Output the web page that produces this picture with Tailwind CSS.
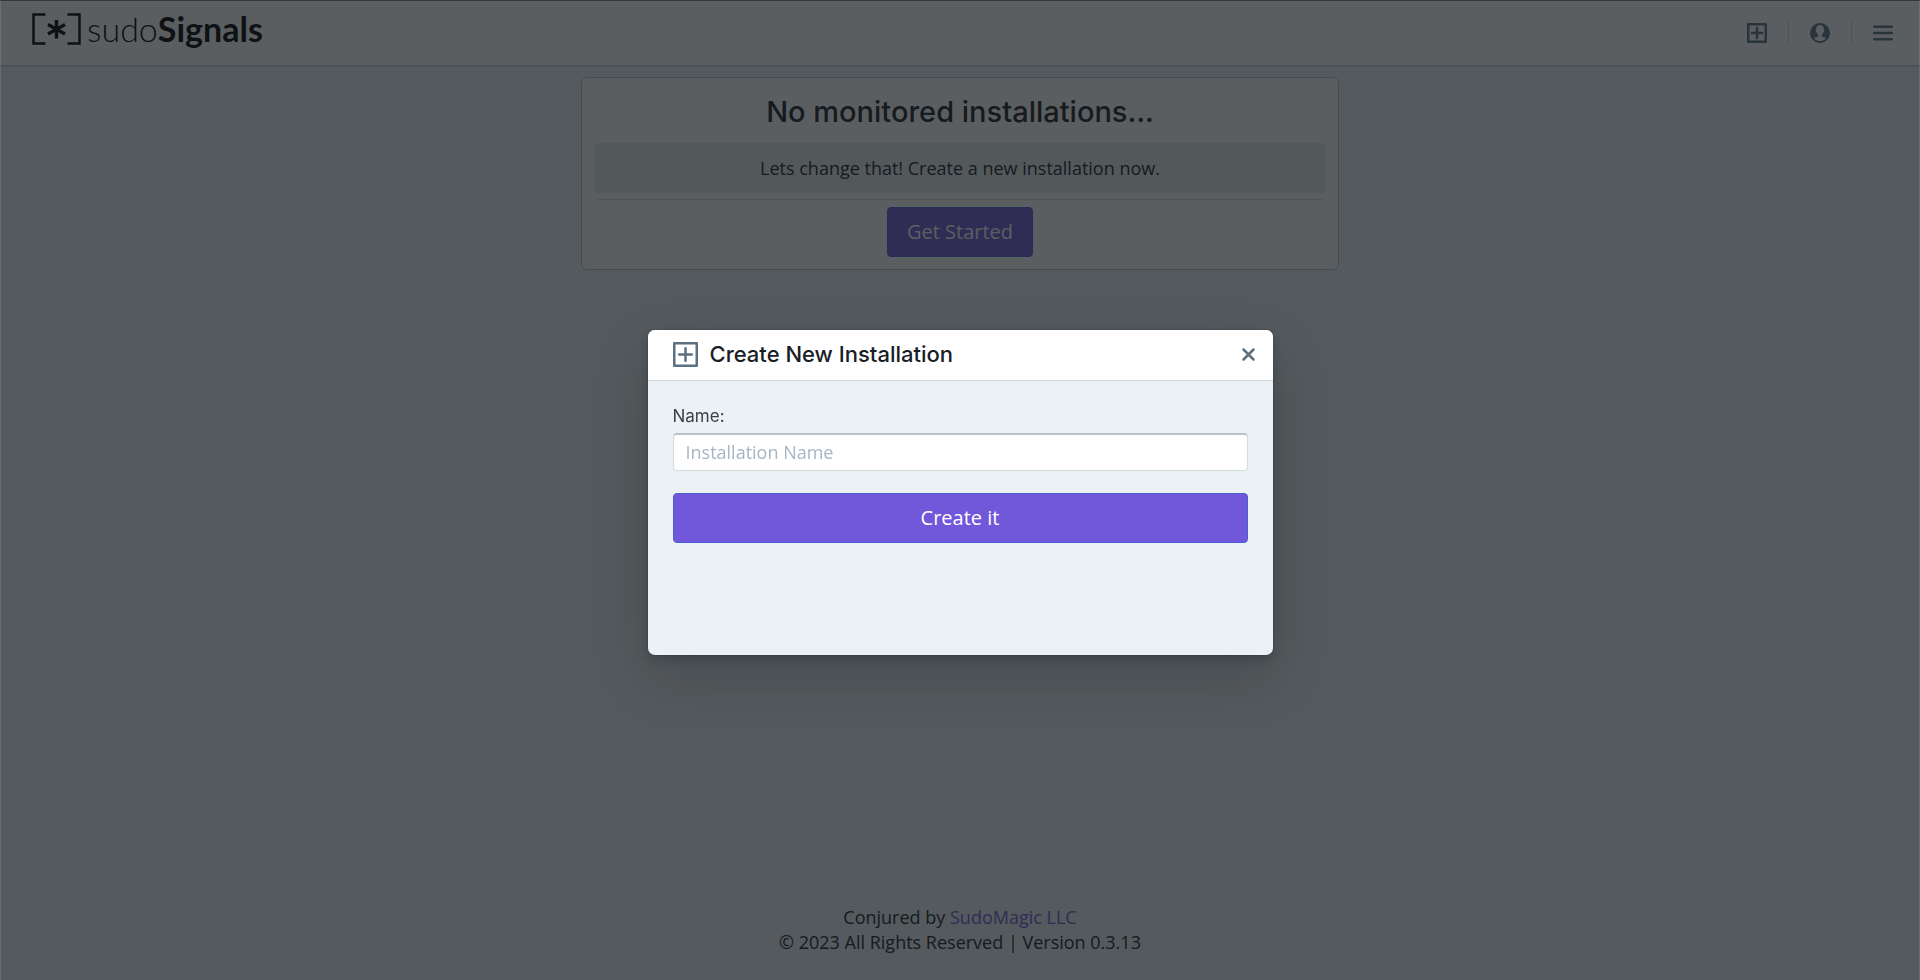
<!DOCTYPE html>
<html lang="en">
<head>
<meta charset="utf-8">
<meta name="viewport" content="width=device-width, initial-scale=1">
<title>sudoSignals</title>
<script src="https://cdn.jsdelivr.net/npm/@tailwindcss/browser@4"></script>
</head>
<body class="bg-[#ebf1f5] font-['Open_Sans',sans-serif] text-lg leading-[25px] text-[#182026]">
<div class="flex min-h-screen flex-col">
  <header class="flex h-[67px] items-center justify-between border-b-2 border-[#cdd3d7] bg-white pr-[18px] pl-8">
    <a href="#" aria-label="sudoSignals home" class="flex items-start gap-[6px] pb-2 text-black">
      <svg class="mt-px h-8 w-[49px]" viewBox="0 0 49 32" fill="none" stroke="currentColor" aria-hidden="true">
        <path d="M13.500 1.500H1.500V30.500H13.500M35.500 1.500H47.500V30.500H35.500" stroke-width="2.500"/>
        <path d="M24.500 7V25.500M16 11.500L33 21M33 11.500L16 21" stroke-width="3.500"/>
      </svg>
      <span class="font-[Lato,sans-serif] text-[34px] leading-[34px] font-light">sudo<b class="font-bold">Signals</b></span>
    </a>
    <nav class="flex items-center gap-3 text-[#5c7080]">
      <button aria-label="Add installation" class="flex size-[38px] items-center justify-center">
        <svg class="size-5" viewBox="0 0 16 16" fill="currentColor"><path d="M15 0H1C.5 0 0 .5 0 1v14c0 .5.5 1 1 1h14c.5 0 1-.5 1-1V1c0-.5-.5-1-1-1zm-1 14H2V2h12v12zM4 9h3v3c0 .6.4 1 1 1s1-.4 1-1V9h3c.6 0 1-.4 1-1s-.4-1-1-1H9V4c0-.6-.4-1-1-1s-1 .4-1 1v3H4c-.6 0-1 .4-1 1s.4 1 1 1z"/></svg>
      </button>
      <span class="h-[25px] w-px bg-[#dadcdd]"></span>
      <button aria-label="Account" class="flex size-[38px] items-center justify-center">
        <svg class="size-5" viewBox="0 0 16 16" fill="currentColor"><path fill-rule="evenodd" d="M8 0a8 8 0 1 0 0 16A8 8 0 0 0 8 0zM8 14.400c-2 0-3.800-.900-4.900-2.300.3-.2.700-.3 1.200-.5 1-.3 2-.6 2.200-1.100.1-.4 0-.9-.2-1.200-.5-.6-.9-1.300-1.100-2-.4-.2-.7-.7-.7-1.200 0-.3.1-.6.300-.8 0-2.100 1-3.700 3.200-3.700s3.200 1.600 3.200 3.700c.2.2.300.5.300.8 0 .5-.3 1-.7 1.200-.2.700-.6 1.400-1.100 2-.2.300-.3.800-.2 1.200.2.500 1.200.8 2.200 1.100.5.200.9.300 1.200.5-1.100 1.400-2.900 2.300-4.900 2.300z"/></svg>
      </button>
      <span class="h-[25px] w-px bg-[#dadcdd]"></span>
      <button aria-label="Menu" class="flex size-[38px] items-center justify-center">
        <svg class="size-5" viewBox="0 0 16 16" fill="none" stroke="currentColor" stroke-width="2" stroke-linecap="round"><path d="M1 3h14M1 8h14M1 13h14"/></svg>
      </button>
    </nav>
  </header>
  <main class="flex flex-1 flex-col items-center px-3 pt-[10px]">
    <section class="flex w-full max-w-[758px] flex-col items-center rounded-md border border-[#b8bec2] bg-white px-3 pt-[18px] pb-3 text-center">
      <h1 class="font-[Inter,sans-serif] text-[29px] leading-8 font-medium">No monitored installations...</h1>
      <p class="mt-[15px] w-full rounded-sm bg-[#e8edef] pt-[13px] pb-3">Lets change that! Create a new installation now.</p>
      <hr class="mt-[6px] w-full max-w-[722px] border-[#cfd3d5]">
      <button class="mt-[7px] h-[50px] rounded-sm border border-[#4a5fd0] bg-[#7157d9] px-[19px] text-xl text-white">Get Started</button>
    </section>
  </main>
  <footer class="pb-[25px] text-center">
    <p>Conjured by <a href="#" class="text-[#7157d9]">SudoMagic LLC</a></p>
    <p>© 2023 All Rights Reserved | Version 0.3.13</p>
  </footer>
</div>
<div class="fixed inset-0 flex items-center justify-center bg-[#141a1d]/70 pt-[5px] shadow-[inset_0_1px_0_rgba(16,16,26,0.5),inset_1px_0_0_rgba(255,255,255,0.1),inset_-1px_0_0_rgba(255,255,255,0.1)]">
  <div role="dialog" aria-modal="true" aria-labelledby="dialog-title" class="flex min-h-[325px] w-full max-w-[625px] flex-col rounded-[7px] bg-[#ebf1f5] shadow-[0_0_0_1px_rgba(16,22,26,0.1),0_5px_10px_rgba(16,22,26,0.2),0_22px_58px_rgba(16,22,26,0.2)]">
    <div class="flex h-[51px] items-center rounded-t-[7px] border-b border-[#cfd5d9] bg-white pr-3 pb-px pl-[25px]">
      <svg class="size-[25px] text-[#5c7080]" viewBox="0 0 20 20" fill="currentColor" aria-hidden="true"><path d="M19 0H1C.45 0 0 .45 0 1v18c0 .55.45 1 1 1h18c.55 0 1-.45 1-1V1c0-.55-.45-1-1-1zm-1 18H2V2h16v16zM5 11h4v4c0 .55.45 1 1 1s1-.45 1-1v-4h4c.55 0 1-.45 1-1s-.45-1-1-1h-4V5c0-.55-.45-1-1-1s-1 .45-1 1v4H5c-.55 0-1 .45-1 1s.45 1 1 1z"/></svg>
      <h2 id="dialog-title" class="ml-3 flex-1 font-[Inter,sans-serif] text-[22px] font-medium">Create New Installation</h2>
      <button aria-label="Close" class="text-[#5c7080]"><svg class="size-[25px]" viewBox="0 0 20 20" fill="none" stroke="currentColor" stroke-width="2" stroke-linecap="round"><path d="M6 6l8 8M14 6l-8 8"/></svg></button>
    </div>
    <form class="flex flex-col px-[25px] pt-[23px]">
      <label for="name" class="font-[Inter,sans-serif] text-[17px] leading-6 text-[#394248]">Name:</label>
      <input id="name" type="text" placeholder="Installation Name" class="mt-[5px] h-[38px] rounded-sm border border-t-2 border-[#d5dadd] border-t-[#bcc1c4] bg-white px-3 pb-px placeholder:text-[#a7b6c2]">
      <button type="button" class="mt-[22px] h-[50px] rounded-sm border border-[#4a5fd0] bg-[#7157d9] text-xl text-white">Create it</button>
    </form>
  </div>
</div>
</body>
</html>
